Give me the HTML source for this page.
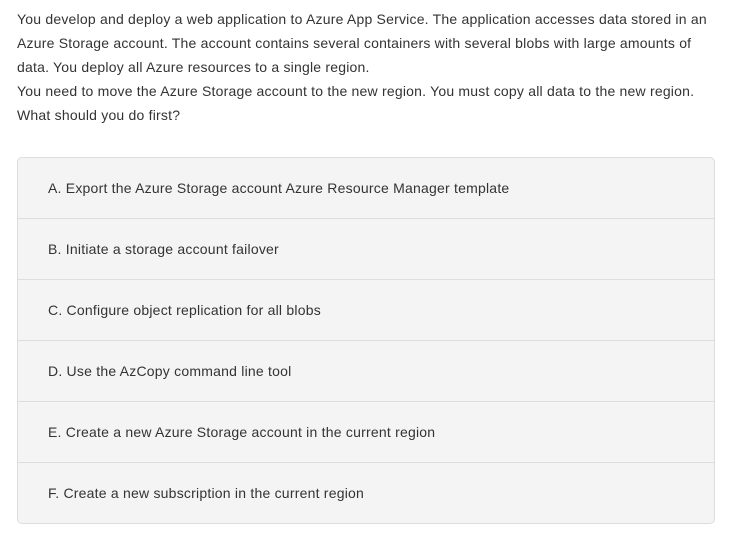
<!DOCTYPE html>
<html><head><style>
body{margin:0;background:#fff;font-family:"Liberation Sans",sans-serif;color:#333;}
.q{position:absolute;left:17px;top:7px;font-size:14px;line-height:24px;white-space:nowrap;letter-spacing:0.21px;}
.box{position:absolute;left:17px;top:157px;width:696px;height:365px;border:1px solid #ddd;border-radius:5px;background:#f4f4f4;overflow:hidden;}
.r{height:60px;border-bottom:1px solid #ddd;font-size:14px;line-height:60px;padding-left:30px;white-space:nowrap;letter-spacing:0.22px;}
.r:last-child{border-bottom:none;}
</style></head><body>
<div class="q">You develop and deploy a web application to Azure App Service. The application accesses data stored in an<br>Azure Storage account. The account contains several containers with several blobs with large amounts of<br>data. You deploy all Azure resources to a single region.<br>You need to move the Azure Storage account to the new region. You must copy all data to the new region.<br>What should you do first?</div>
<div class="box">
<div class="r">A. Export the Azure Storage account Azure Resource Manager template</div>
<div class="r">B. Initiate a storage account failover</div>
<div class="r">C. Configure object replication for all blobs</div>
<div class="r">D. Use the AzCopy command line tool</div>
<div class="r">E. Create a new Azure Storage account in the current region</div>
<div class="r">F. Create a new subscription in the current region</div>
</div>
</body></html>
